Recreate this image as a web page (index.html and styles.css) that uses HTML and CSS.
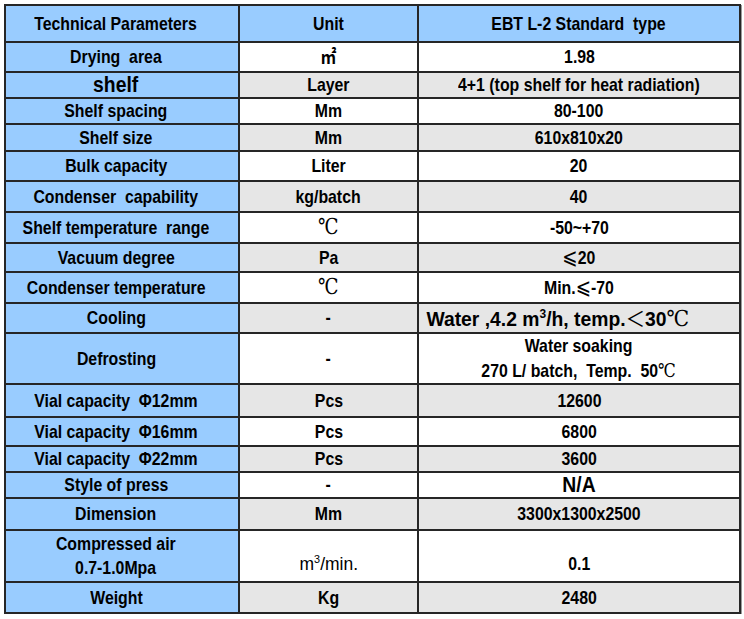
FILE: index.html
```html
<!DOCTYPE html>
<html lang="en">
<head>
<meta charset="utf-8">
<title>EBT L-2 Technical Parameters</title>
<link rel="stylesheet" href="styles.css">
</head>
<body>
<div class="sheet">
  <div class="cell head param"><span class="t">Technical Parameters</span></div>
  <div class="cell head"><span class="t">Unit</span></div>
  <div class="cell head"><span class="t">EBT L-2 Standard  type</span></div>

  <div class="cell param"><span class="t">Drying  area</span></div>
  <div class="cell plain"><span class="t"><span class="cjk">㎡</span></span></div>
  <div class="cell plain"><span class="t">1.98</span></div>

  <div class="cell param big"><span class="t">shelf</span></div>
  <div class="cell alt"><span class="t">Layer</span></div>
  <div class="cell alt"><span class="t">4+1 (top shelf for heat radiation)</span></div>

  <div class="cell param"><span class="t">Shelf spacing</span></div>
  <div class="cell plain"><span class="t">Mm</span></div>
  <div class="cell plain"><span class="t">80-100</span></div>

  <div class="cell param"><span class="t">Shelf size</span></div>
  <div class="cell alt"><span class="t">Mm</span></div>
  <div class="cell alt"><span class="t">610x810x20</span></div>

  <div class="cell param"><span class="t">Bulk capacity</span></div>
  <div class="cell plain"><span class="t">Liter</span></div>
  <div class="cell plain"><span class="t">20</span></div>

  <div class="cell param"><span class="t">Condenser  capability</span></div>
  <div class="cell alt"><span class="t">kg/batch</span></div>
  <div class="cell alt"><span class="t">40</span></div>

  <div class="cell param"><span class="t">Shelf temperature  range</span></div>
  <div class="cell plain"><span class="t"><span class="deg">℃</span></span></div>
  <div class="cell plain"><span class="t">-50~+70</span></div>

  <div class="cell param"><span class="t">Vacuum degree</span></div>
  <div class="cell alt"><span class="t">Pa</span></div>
  <div class="cell alt"><span class="t"><span class="sym">⩽</span>20</span></div>

  <div class="cell param"><span class="t">Condenser temperature</span></div>
  <div class="cell plain"><span class="t"><span class="deg">℃</span></span></div>
  <div class="cell plain"><span class="t">Min.<span class="sym">⩽</span>-70</span></div>

  <div class="cell param"><span class="t">Cooling</span></div>
  <div class="cell alt"><span class="t">-</span></div>
  <div class="cell alt large"><span class="t">Water ,4.2 m<sup>3</sup>/h, temp.<span class="lt">＜</span>30<span class="deg">℃</span></span></div>

  <div class="cell param"><span class="t">Defrosting</span></div>
  <div class="cell plain"><span class="t">-</span></div>
  <div class="cell plain stack"><span class="t">Water soaking</span><span class="t">270 L/ batch,  Temp.  50<span class="deg small">℃</span></span></div>

  <div class="cell param"><span class="t">Vial capacity  Φ12mm</span></div>
  <div class="cell alt"><span class="t">Pcs</span></div>
  <div class="cell alt"><span class="t">12600</span></div>

  <div class="cell param"><span class="t">Vial capacity  Φ16mm</span></div>
  <div class="cell plain"><span class="t">Pcs</span></div>
  <div class="cell plain"><span class="t">6800</span></div>

  <div class="cell param"><span class="t">Vial capacity  Φ22mm</span></div>
  <div class="cell alt"><span class="t">Pcs</span></div>
  <div class="cell alt"><span class="t">3600</span></div>

  <div class="cell param"><span class="t">Style of press</span></div>
  <div class="cell plain"><span class="t">-</span></div>
  <div class="cell plain big"><span class="t">N/A</span></div>

  <div class="cell param"><span class="t">Dimension</span></div>
  <div class="cell alt"><span class="t">Mm</span></div>
  <div class="cell alt"><span class="t">3300x1300x2500</span></div>

  <div class="cell param stack"><span class="t">Compressed air</span><span class="t">0.7-1.0Mpa</span></div>
  <div class="cell plain low"><span class="t light">m<sup>3</sup>/min.</span></div>
  <div class="cell plain low"><span class="t">0.1</span></div>

  <div class="cell param"><span class="t">Weight</span></div>
  <div class="cell alt"><span class="t">Kg</span></div>
  <div class="cell alt"><span class="t">2480</span></div>
</div>
</body>
</html>
```

FILE: styles.css
```css
html, body {
  margin: 0;
  padding: 0;
  background: #ffffff;
}

.sheet {
  display: grid;
  grid-template-columns: 232px 177px 320px;
  grid-template-rows: 35px 28px 24px 24px 25px 28px 29px 29px 27px 29px 28px 49px 31px 27px 24px 24px 30px 50px 29px;
  gap: 2px;
  width: max-content;
  margin: 4px 0 0 4px;
  background: #262626;
  border: 2px solid #262626;
  box-shadow: 1px 1px 0 #9a9a9a;
}

.cell {
  display: flex;
  align-items: center;
  justify-content: center;
  text-align: center;
  white-space: pre;
  font-family: "Liberation Sans", Arial, sans-serif;
  font-weight: bold;
  font-size: 19px;
  line-height: 24px;
  color: #000000;
}

.t {
  display: inline-block;
  transform: scaleX(0.834);
  transform-origin: center;
}

.head,
.param {
  background: #99ccff;
}

.param {
  padding-right: 12px;
}

.plain {
  background: #ffffff;
}

.alt {
  background: #e6e6e6;
}

.big {
  font-size: 22px;
}

.big .t {
  transform: scaleX(0.88);
}

.large {
  font-size: 21px;
  padding-right: 42px;
}

.large .t {
  transform: scaleX(0.92);
}

.stack {
  flex-direction: column;
}

.low {
  align-items: flex-end;
  padding-bottom: 5px;
}

.light {
  font-weight: normal;
}

.t.light {
  transform: scaleX(0.92);
}

sup {
  font-size: 0.62em;
  line-height: 0;
  vertical-align: super;
}

.cjk {
  font-family: "Noto Sans CJK SC", sans-serif;
  font-weight: bold;
  font-size: 19px;
}

.deg {
  font-family: "DejaVu Serif", "Noto Sans CJK SC", serif;
  font-weight: normal;
  font-size: 22px;
}

.deg.small {
  font-size: 19px;
}

.sym {
  font-family: "DejaVu Sans", sans-serif;
  font-weight: normal;
  font-size: 22px;
}

.lt {
  font-family: "Noto Sans CJK SC", sans-serif;
  font-weight: normal;
}
```
